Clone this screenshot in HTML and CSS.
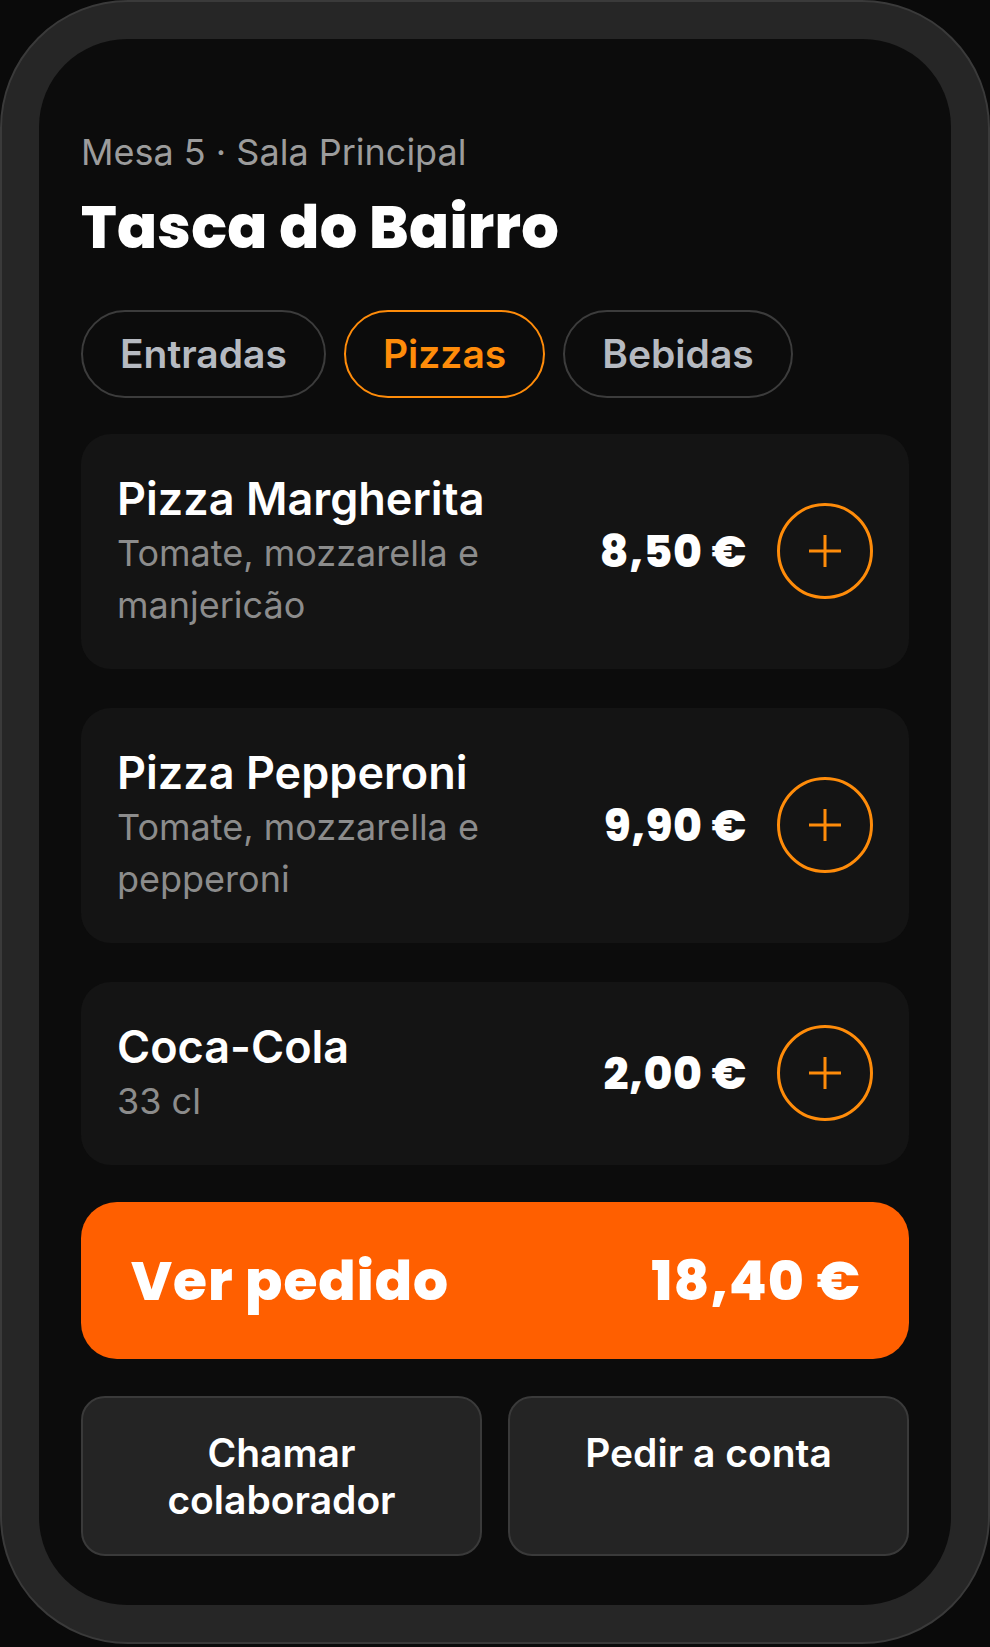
FILE: index.html
```html
<!DOCTYPE html>
<html lang="pt">
<head>
    <meta charset="UTF-8">
    <meta name="viewport" content="width=device-width, initial-scale=1.0">
    <title>Tasca do Bairro</title>
    <link rel="stylesheet" href="styles.css">
</head>
<body>

    <div class="phone">
        <div class="screen">
            <p class="table-info">Mesa 5 · Sala Principal</p>
            <h1 class="venue">Tasca do Bairro</h1>

            <div class="tabs">
                <button class="tab">Entradas</button>
                <button class="tab active">Pizzas</button>
                <button class="tab">Bebidas</button>
            </div>

            <div class="menu">
                <div class="item">
                    <div class="item-info">
                        <div class="item-name">Pizza Margherita</div>
                        <div class="item-desc">Tomate, mozzarella e manjericão</div>
                    </div>
                    <div class="item-side">
                        <span class="price">8,50 €</span>
                        <button class="add" aria-label="Adicionar">
                            <svg viewBox="0 0 32 32" width="32" height="32"><path d="M16 0v32M0 16h32" /></svg>
                        </button>
                    </div>
                </div>

                <div class="item">
                    <div class="item-info">
                        <div class="item-name">Pizza Pepperoni</div>
                        <div class="item-desc">Tomate, mozzarella e pepperoni</div>
                    </div>
                    <div class="item-side">
                        <span class="price">9,90 €</span>
                        <button class="add" aria-label="Adicionar">
                            <svg viewBox="0 0 32 32" width="32" height="32"><path d="M16 0v32M0 16h32" /></svg>
                        </button>
                    </div>
                </div>

                <div class="item">
                    <div class="item-info">
                        <div class="item-name">Coca-Cola</div>
                        <div class="item-desc">33 cl</div>
                    </div>
                    <div class="item-side">
                        <span class="price">2,00 €</span>
                        <button class="add" aria-label="Adicionar">
                            <svg viewBox="0 0 32 32" width="32" height="32"><path d="M16 0v32M0 16h32" /></svg>
                        </button>
                    </div>
                </div>
            </div>

            <button class="order">
                <span>Ver pedido</span>
                <span>18,40 €</span>
            </button>

            <div class="actions">
                <button class="action">Chamar colaborador</button>
                <button class="action">Pedir a conta</button>
            </div>
        </div>
    </div>

</body>
</html>
```

FILE: styles.css
```css
* { box-sizing: border-box; }
body { margin: 0; background-color: #0a0a0a; font-family: "Inter", "Noto Sans", sans-serif; color: #fff; min-height: 1647px; }
button { font-family: inherit; cursor: pointer; }

.phone { width: 990px; background-color: #262626; border: 2px solid #3a3a3a; border-radius: 128px; padding: 37px; }
.screen { background-color: #0c0c0c; border-radius: 88px; padding: 91px 42px 49px; display: flex; flex-direction: column; }

.table-info { margin: 0 0 22px; font-size: 36px; line-height: 44px; color: #9c9c9c; }
.venue { margin: 0; font-family: "Poppins", "Inter", sans-serif; font-size: 59px; line-height: 64px; font-weight: 800; letter-spacing: 0.3px; }

.tabs { display: flex; gap: 18px; margin-top: 50px; margin-bottom: 36px; }
.tab { background: none; border: 2px solid #3c3c3c; border-radius: 999px; padding: 20px 37px; font-size: 39px; line-height: 44px; font-weight: 600; color: #b6bac1; }
.tab.active { border-color: #ff8c0a; color: #ff8c0a; }

.menu { display: flex; flex-direction: column; gap: 39px; }
.item { background-color: #141414; border-radius: 30px; padding: 37px 36px 38px 36px; display: flex; align-items: center; justify-content: space-between; gap: 24px; }
.item-info { flex: 1; min-width: 0; }
.item-name { font-size: 45px; line-height: 56px; font-weight: 600; color: #fff; }
.item-desc { font-size: 36px; line-height: 52px; color: #8c8c8c; }
.item-side { display: flex; align-items: center; gap: 30px; }
.price { font-family: "Poppins", "Inter", sans-serif; font-size: 44px; font-weight: 800; letter-spacing: 0.6px; white-space: nowrap; }
.add { width: 96px; height: 96px; border-radius: 50%; border: 3px solid #ff8c0a; background: none; padding: 0; display: flex; align-items: center; justify-content: center; }
.add svg { stroke: #ff8c0a; stroke-width: 3; fill: none; }

.order { height: 157px; margin-top: 37px; border: none; border-radius: 36px; background-color: #ff5f00; color: #fff; display: flex; align-items: center; justify-content: space-between; padding: 0 48px 0 50px; font-family: "Poppins", "Inter", sans-serif; font-size: 55px; font-weight: 800; letter-spacing: 1px; }

.actions { display: grid; grid-template-columns: 1fr 1fr; gap: 26px; margin-top: 37px; }
.action { background-color: #242424; border: 2px solid #3a3a3a; border-radius: 24px; padding: 31px 20px; color: #fff; font-size: 39px; line-height: 47px; font-weight: 600; text-align: center; display: flex; align-items: flex-start; justify-content: center; }
```
